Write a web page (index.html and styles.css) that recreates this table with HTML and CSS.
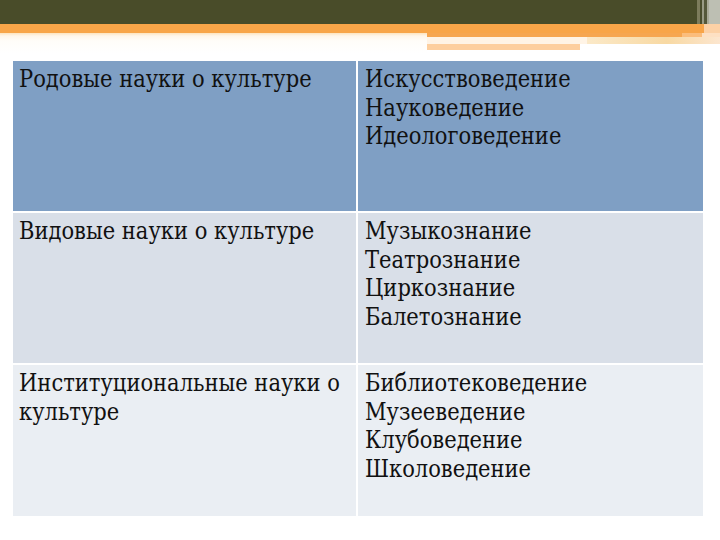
FILE: index.html
```html
<!DOCTYPE html>
<html lang="ru">
<head>
<meta charset="utf-8">
<link rel="stylesheet" href="styles.css">
</head>
<body>
<div class="slide">
  <div class="bar">
    <div class="bar-main"></div>
    <div class="s s1"></div><div class="s s2"></div><div class="s s3"></div><div class="s s4"></div><div class="s s5"></div><div class="s s6"></div>
  </div>
  <div class="orange">
    <div class="orange-main"></div>
    <div class="orange-end"></div>
  </div>
  <div class="deco">
    <div class="deco-left"></div>
    <div class="deco-right">
      <div class="d-row d-row1"><div class="d1a"></div><div class="d1b"></div><div class="d1c"></div></div>
      <div class="d-row d-row2"><div class="d2a"></div><div class="d2b"></div></div>
      <div class="d-row d-row3"><div class="d3a"></div></div>
    </div>
  </div>
  <div class="table">
    <div class="row r1">
      <div class="cell c1">Родовые науки о культуре</div>
      <div class="cell c2">Искусствоведение<br>Науковедение<br>Идеологоведение</div>
    </div>
    <div class="row r2">
      <div class="cell c1">Видовые науки о культуре</div>
      <div class="cell c2">Музыкознание<br>Театрознание<br>Циркознание<br>Балетознание</div>
    </div>
    <div class="row r3">
      <div class="cell c1">Институциональные науки о культуре</div>
      <div class="cell c2">Библиотековедение<br>Музееведение<br>Клубоведение<br>Школоведение</div>
    </div>
  </div>
</div>
</body>
</html>
```
FILE: styles.css
```css
* { box-sizing: border-box; }
html, body { margin: 0; padding: 0; background: #ffffff; }
.slide { width: 720px; height: 540px; overflow: hidden; background: #fff; }
.bar { display: flex; height: 24px; }
.bar-main { flex: 1; background: #494c29; }
.s { height: 24px; }
.s1 { width: 3px; background: #7d7c5c; }
.s2 { width: 2px; background: #4a4d2c; }
.s3 { width: 2px; background: #9a9b85; }
.s4 { width: 3px; background: #55583a; }
.s5 { width: 2px; background: #a9aa98; }
.s6 { width: 11px; background: #bdbfb3; }
.orange { display: flex; height: 9px; }
.orange-main { flex: 1; background: #f8a548; }
.orange-end { width: 16px; background: #fcd1a6; }
.deco { display: flex; height: 20px; }
.deco-left { width: 427px; background: linear-gradient(#fde4bf 0, #fff6ea 3px, #fffdf9 8px, #ffffff 20px); }
.deco-right { flex: 1; display: flex; flex-direction: column; }
.d-row { display: flex; }
.d-row1 { height: 4px; }
.d1a { flex: 1; background: #f6a650; }
.d1b { width: 20px; background: #fbbd7c; }
.d1c { width: 18px; background: #fde0c3; }
.d-row2 { height: 7px; }
.d2a { width: 160px; background: #fff4e6; }
.d2b { flex: 1; background: linear-gradient(90deg, #fbe9c8, #f8d9a3 60%, #fce6cf); }
.d-row3 { height: 6px; }
.d3a { width: 153px; background: #fdcf9f; }
.table {
  margin: 8px 0 0 13px;
  width: 690px;
  display: flex;
  flex-direction: column;
  gap: 2px;
  font-family: "DejaVu Serif", "Liberation Serif", serif;
  font-stretch: condensed;
  font-size: 23.4px;
  line-height: 28.5px;
  color: #111111;
}
.row { display: flex; height: 150px; gap: 2px; }
.r3 { height: 151px; }
.cell { padding: 4px 4px 0 6px; white-space: nowrap; }
.c1 { width: 343px; white-space: normal; }
.c2 { flex: 1; padding-left: 7px; }
.r1 .cell { background: #7f9fc4; }
.r2 .cell { background: #d9dfe8; }
.r3 .cell { background: #eaeef3; }
```
